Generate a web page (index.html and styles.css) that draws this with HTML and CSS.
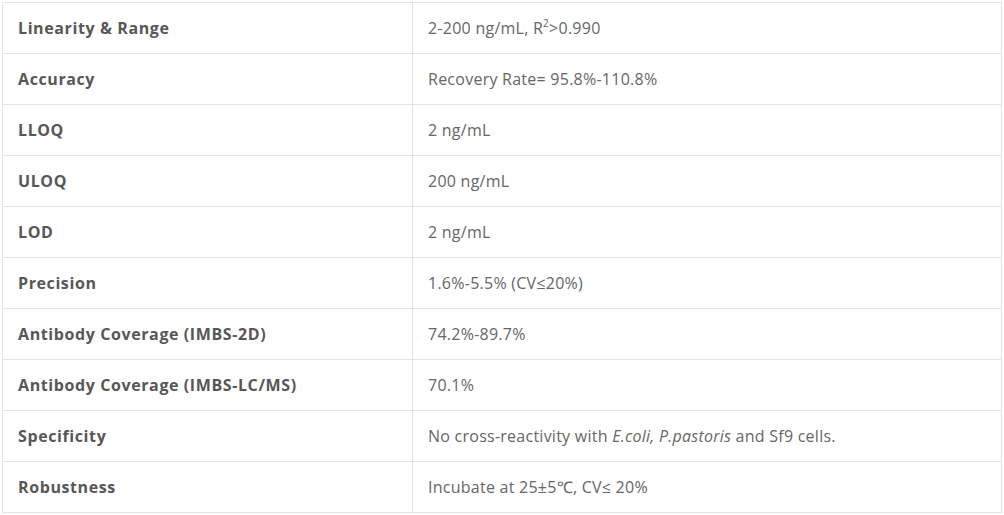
FILE: index.html
```html
<!DOCTYPE html>
<html>
<head>
<meta charset="utf-8">
<link rel="stylesheet" href="styles.css">
</head>
<body>
<table class="spec">
  <tbody>
    <tr><th>Linearity &amp; Range</th><td>2-200 ng/mL, R<sup>2</sup>&gt;0.990</td></tr>
    <tr><th>Accuracy</th><td>Recovery Rate= 95.8%-110.8%</td></tr>
    <tr><th>LLOQ</th><td>2 ng/mL</td></tr>
    <tr><th>ULOQ</th><td>200 ng/mL</td></tr>
    <tr><th>LOD</th><td>2 ng/mL</td></tr>
    <tr><th>Precision</th><td>1.6%-5.5% (CV≤20%)</td></tr>
    <tr><th>Antibody Coverage (IMBS-2D)</th><td>74.2%-89.7%</td></tr>
    <tr><th>Antibody Coverage (IMBS-LC/MS)</th><td>70.1%</td></tr>
    <tr><th>Specificity</th><td>No cross-reactivity with <em>E.coli, P.pastoris</em> and Sf9 cells.</td></tr>
    <tr><th>Robustness</th><td>Incubate at 25±5℃, CV≤ 20%</td></tr>
  </tbody>
</table>
</body>
</html>
```
FILE: styles.css
```css
html, body {
  background: #ffffff;
}
body {
  margin: 2px;
  font-family: "Open Sans", "Liberation Sans", sans-serif;
  color: #5f5f5f;
}
.spec {
  border-collapse: collapse;
  width: 1000px;
  table-layout: fixed;
}
.spec th,
.spec td {
  border: 1px solid #e4e4e4;
  height: 51px;
  box-sizing: border-box;
  padding: 0 15px;
  text-align: left;
  vertical-align: middle;
  font-size: 16px;
  line-height: 20px;
}
.spec th {
  width: 410px;
  font-weight: 700;
  letter-spacing: 0.6px;
  color: #575757;
}
.spec td {
  font-weight: 400;
  letter-spacing: 0.25px;
  color: #666666;
}
.spec sup {
  font-size: 10px;
  line-height: 0;
  vertical-align: 7px;
}
.spec em {
  font-style: italic;
}
```
